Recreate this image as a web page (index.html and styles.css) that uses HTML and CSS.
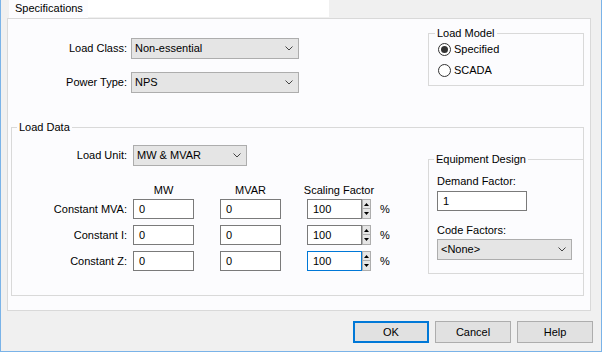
FILE: index.html
```html
<!DOCTYPE html>
<html lang="en">

<head>
    <meta charset="UTF-8">
    <title>Load Specifications</title>
    <link rel="stylesheet" href="styles.css">
</head>

<body>
    <div class="window">
        <div class="tabs">
            <div class="tab">Specifications</div>
            <div class="tab-strip"></div>
        </div>

        <div class="panel">
            <div class="top">
                <div class="fields">
                    <div class="row">
                        <span class="label">Load Class:</span>
                        <span class="combo class-combo">
                            <span>Non-essential</span>
                            <svg width="8" height="5" viewBox="0 0 8 5"><polyline points="0.5,0.5 4,4 7.5,0.5" /></svg>
                        </span>
                    </div>
                    <div class="row">
                        <span class="label">Power Type:</span>
                        <span class="combo class-combo">
                            <span>NPS</span>
                            <svg width="8" height="5" viewBox="0 0 8 5"><polyline points="0.5,0.5 4,4 7.5,0.5" /></svg>
                        </span>
                    </div>
                </div>

                <fieldset class="group model">
                    <legend>Load Model</legend>
                    <div class="radios">
                        <label class="radio"><span class="dot checked"></span>Specified</label>
                        <label class="radio"><span class="dot"></span>SCADA</label>
                    </div>
                </fieldset>
            </div>

            <fieldset class="group data">
                <legend>Load Data</legend>
                <div class="data-body">
                    <div class="data-left">
                        <div class="row unit-row">
                            <span class="label">Load Unit:</span>
                            <span class="combo unit-combo">
                                <span>MW &amp; MVAR</span>
                                <svg width="8" height="5" viewBox="0 0 8 5"><polyline points="0.5,0.5 4,4 7.5,0.5" /></svg>
                            </span>
                        </div>

                        <div class="heads">
                            <span class="head">MW</span>
                            <span class="head">MVAR</span>
                            <span class="head scale-head">Scaling Factor</span>
                        </div>

                        <div class="row entry">
                            <span class="label">Constant MVA:</span>
                            <span class="input mw">0</span>
                            <span class="input mvar">0</span>
                            <span class="spin-box">
                                <span class="input scale">100</span>
                                <span class="spinner">
                                    <span class="spin-btn"><svg width="5" height="3" viewBox="0 0 5 3"><polygon points="0,3 2.5,0 5,3" /></svg></span>
                                    <span class="spin-btn"><svg width="5" height="3" viewBox="0 0 5 3"><polygon points="0,0 2.5,3 5,0" /></svg></span>
                                </span>
                            </span>
                            <span class="unit">%</span>
                        </div>
                        <div class="row entry">
                            <span class="label">Constant I:</span>
                            <span class="input mw">0</span>
                            <span class="input mvar">0</span>
                            <span class="spin-box">
                                <span class="input scale">100</span>
                                <span class="spinner">
                                    <span class="spin-btn"><svg width="5" height="3" viewBox="0 0 5 3"><polygon points="0,3 2.5,0 5,3" /></svg></span>
                                    <span class="spin-btn"><svg width="5" height="3" viewBox="0 0 5 3"><polygon points="0,0 2.5,3 5,0" /></svg></span>
                                </span>
                            </span>
                            <span class="unit">%</span>
                        </div>
                        <div class="row entry">
                            <span class="label">Constant Z:</span>
                            <span class="input mw">0</span>
                            <span class="input mvar">0</span>
                            <span class="spin-box">
                                <span class="input scale focused">100</span>
                                <span class="spinner">
                                    <span class="spin-btn"><svg width="5" height="3" viewBox="0 0 5 3"><polygon points="0,3 2.5,0 5,3" /></svg></span>
                                    <span class="spin-btn"><svg width="5" height="3" viewBox="0 0 5 3"><polygon points="0,0 2.5,3 5,0" /></svg></span>
                                </span>
                            </span>
                            <span class="unit">%</span>
                        </div>
                    </div>

                    <fieldset class="group equip">
                        <legend>Equipment Design</legend>
                        <div class="equip-body">
                            <div class="caption">Demand Factor:</div>
                            <span class="input demand">1</span>
                            <div class="caption code">Code Factors:</div>
                            <span class="combo code-combo">
                                <span>&lt;None&gt;</span>
                                <svg width="8" height="5" viewBox="0 0 8 5"><polyline points="0.5,0.5 4,4 7.5,0.5" /></svg>
                            </span>
                        </div>
                    </fieldset>
                </div>
            </fieldset>
        </div>

        <div class="buttons">
            <button class="btn default">OK</button>
            <button class="btn">Cancel</button>
            <button class="btn">Help</button>
        </div>
    </div>
</body>

</html>
```

FILE: styles.css
```css
body {
    margin: 0;
    font-family: "Liberation Sans", Arial, sans-serif;
    font-size: 11px;
    line-height: 13px;
    color: #000;
}

.window {
    width: 602px;
    height: 352px;
    box-sizing: border-box;
    background: #f0f0f0;
    border: 1px solid #7ab3e8;
    border-top: none;
}

/* tab header */
.tabs {
    display: flex;
    height: 18px;
    padding-left: 8px;
}

.tab {
    width: 79px;
    height: 18px;
    padding-left: 6px;
    box-sizing: border-box;
    background: #fcfcfe;
    line-height: 17px;
}

.tab-strip {
    width: 241px;
    height: 17px;
    background: #fff;
}

/* page */
.panel {
    margin-left: 6px;
    width: 584px;
    height: 293px;
    box-sizing: border-box;
    padding: 0 6px 0 3px;
    background: #fcfcfe;
    border: 1px solid #d9d9d9;
}

.top {
    display: flex;
    justify-content: space-between;
    height: 94px;
    padding-top: 8px;
}

.fields {
    padding-top: 11px;
}

.row {
    display: flex;
    align-items: center;
}

.fields .row + .row {
    margin-top: 13px;
}

.label {
    width: 116px;
    text-align: right;
    white-space: nowrap;
}

.combo {
    display: flex;
    align-items: center;
    justify-content: space-between;
    height: 21px;
    box-sizing: border-box;
    padding: 0 5px 0 3px;
    background: #e5e5e5;
    border: 1px solid #adadad;
}

.combo svg polyline {
    fill: none;
    stroke: #444;
    stroke-width: 1;
}

.class-combo {
    width: 168px;
    margin-left: 4px;
}

/* group boxes */
.group {
    margin: 0;
    padding: 0;
    min-width: 0;
    border: 1px solid #d9d9d9;
}

.group legend {
    padding: 0 2px;
    margin-left: 6px;
    line-height: 13px;
}

.model {
    width: 156px;
    height: 59px;
    box-sizing: border-box;
}

.radios {
    padding: 2px 0 0 9px;
}

.radio {
    display: flex;
    align-items: center;
    height: 14px;
}

.radio + .radio {
    margin-top: 7px;
}

.dot {
    display: flex;
    align-items: center;
    justify-content: center;
    width: 13px;
    height: 13px;
    box-sizing: border-box;
    margin-right: 3px;
    border: 1px solid #333;
    border-radius: 50%;
    background: #fff;
}

.dot.checked::after {
    content: "";
    width: 7px;
    height: 7px;
    border-radius: 50%;
    background: #333;
}

/* load data */
.data legend {
    margin-left: 5px;
}

.data-body {
    display: flex;
    align-items: flex-start;
    height: 161px;
}

.data-left {
    width: 416px;
    padding-top: 11px;
}

.data-left .label {
    width: 115px;
}

.unit-combo {
    width: 114px;
    margin-left: 6px;
}

.heads {
    display: flex;
    margin-top: 18px;
    padding-left: 121px;
}

.head {
    display: flex;
    justify-content: center;
    width: 61px;
    white-space: nowrap;
}

.head + .head {
    margin-left: 26px;
}

.scale-head {
    width: 64px;
}

.entry {
    margin-top: 6px;
}

.heads + .entry {
    margin-top: 2px;
}

.input {
    display: flex;
    align-items: center;
    width: 61px;
    height: 20px;
    box-sizing: border-box;
    padding-left: 5px;
    background: #fff;
    border: 1px solid #7a7a7a;
}

.input.mw {
    margin-left: 6px;
}

.input.mvar {
    margin-left: 26px;
}

.spin-box {
    display: flex;
    margin-left: 26px;
}

.input.scale {
    width: 55px;
}

.input.focused {
    border-color: #0078d7;
}

.spinner {
    display: flex;
    flex-direction: column;
    width: 9px;
    height: 20px;
}

.spin-btn {
    display: flex;
    align-items: center;
    justify-content: center;
    height: 10px;
    box-sizing: border-box;
    background: #e5e5e5;
    border: 1px solid #adadad;
}

.spin-btn + .spin-btn {
    border-top: none;
}

.spin-btn polygon {
    fill: #000;
}

.unit {
    margin-left: 9px;
}

/* equipment design */
.equip {
    width: 156px;
    height: 121px;
    box-sizing: border-box;
    margin: 19px -1px 0 0;
}

.equip-body {
    padding: 9px 0 0 8px;
}

.input.demand {
    width: 90px;
    margin-top: 3px;
}

.caption.code {
    margin-top: 13px;
}

.code-combo {
    width: 135px;
    margin-top: 2px;
}

/* dialog buttons */
.buttons {
    display: flex;
    justify-content: flex-end;
    gap: 6px;
    margin-top: 10px;
    padding-right: 8px;
}

.btn {
    width: 76px;
    height: 22px;
    padding: 0;
    font-family: inherit;
    font-size: 11px;
    color: #000;
    background: #e1e1e1;
    border: 1px solid #adadad;
}

.btn.default {
    border: 2px solid #0078d7;
}
```
